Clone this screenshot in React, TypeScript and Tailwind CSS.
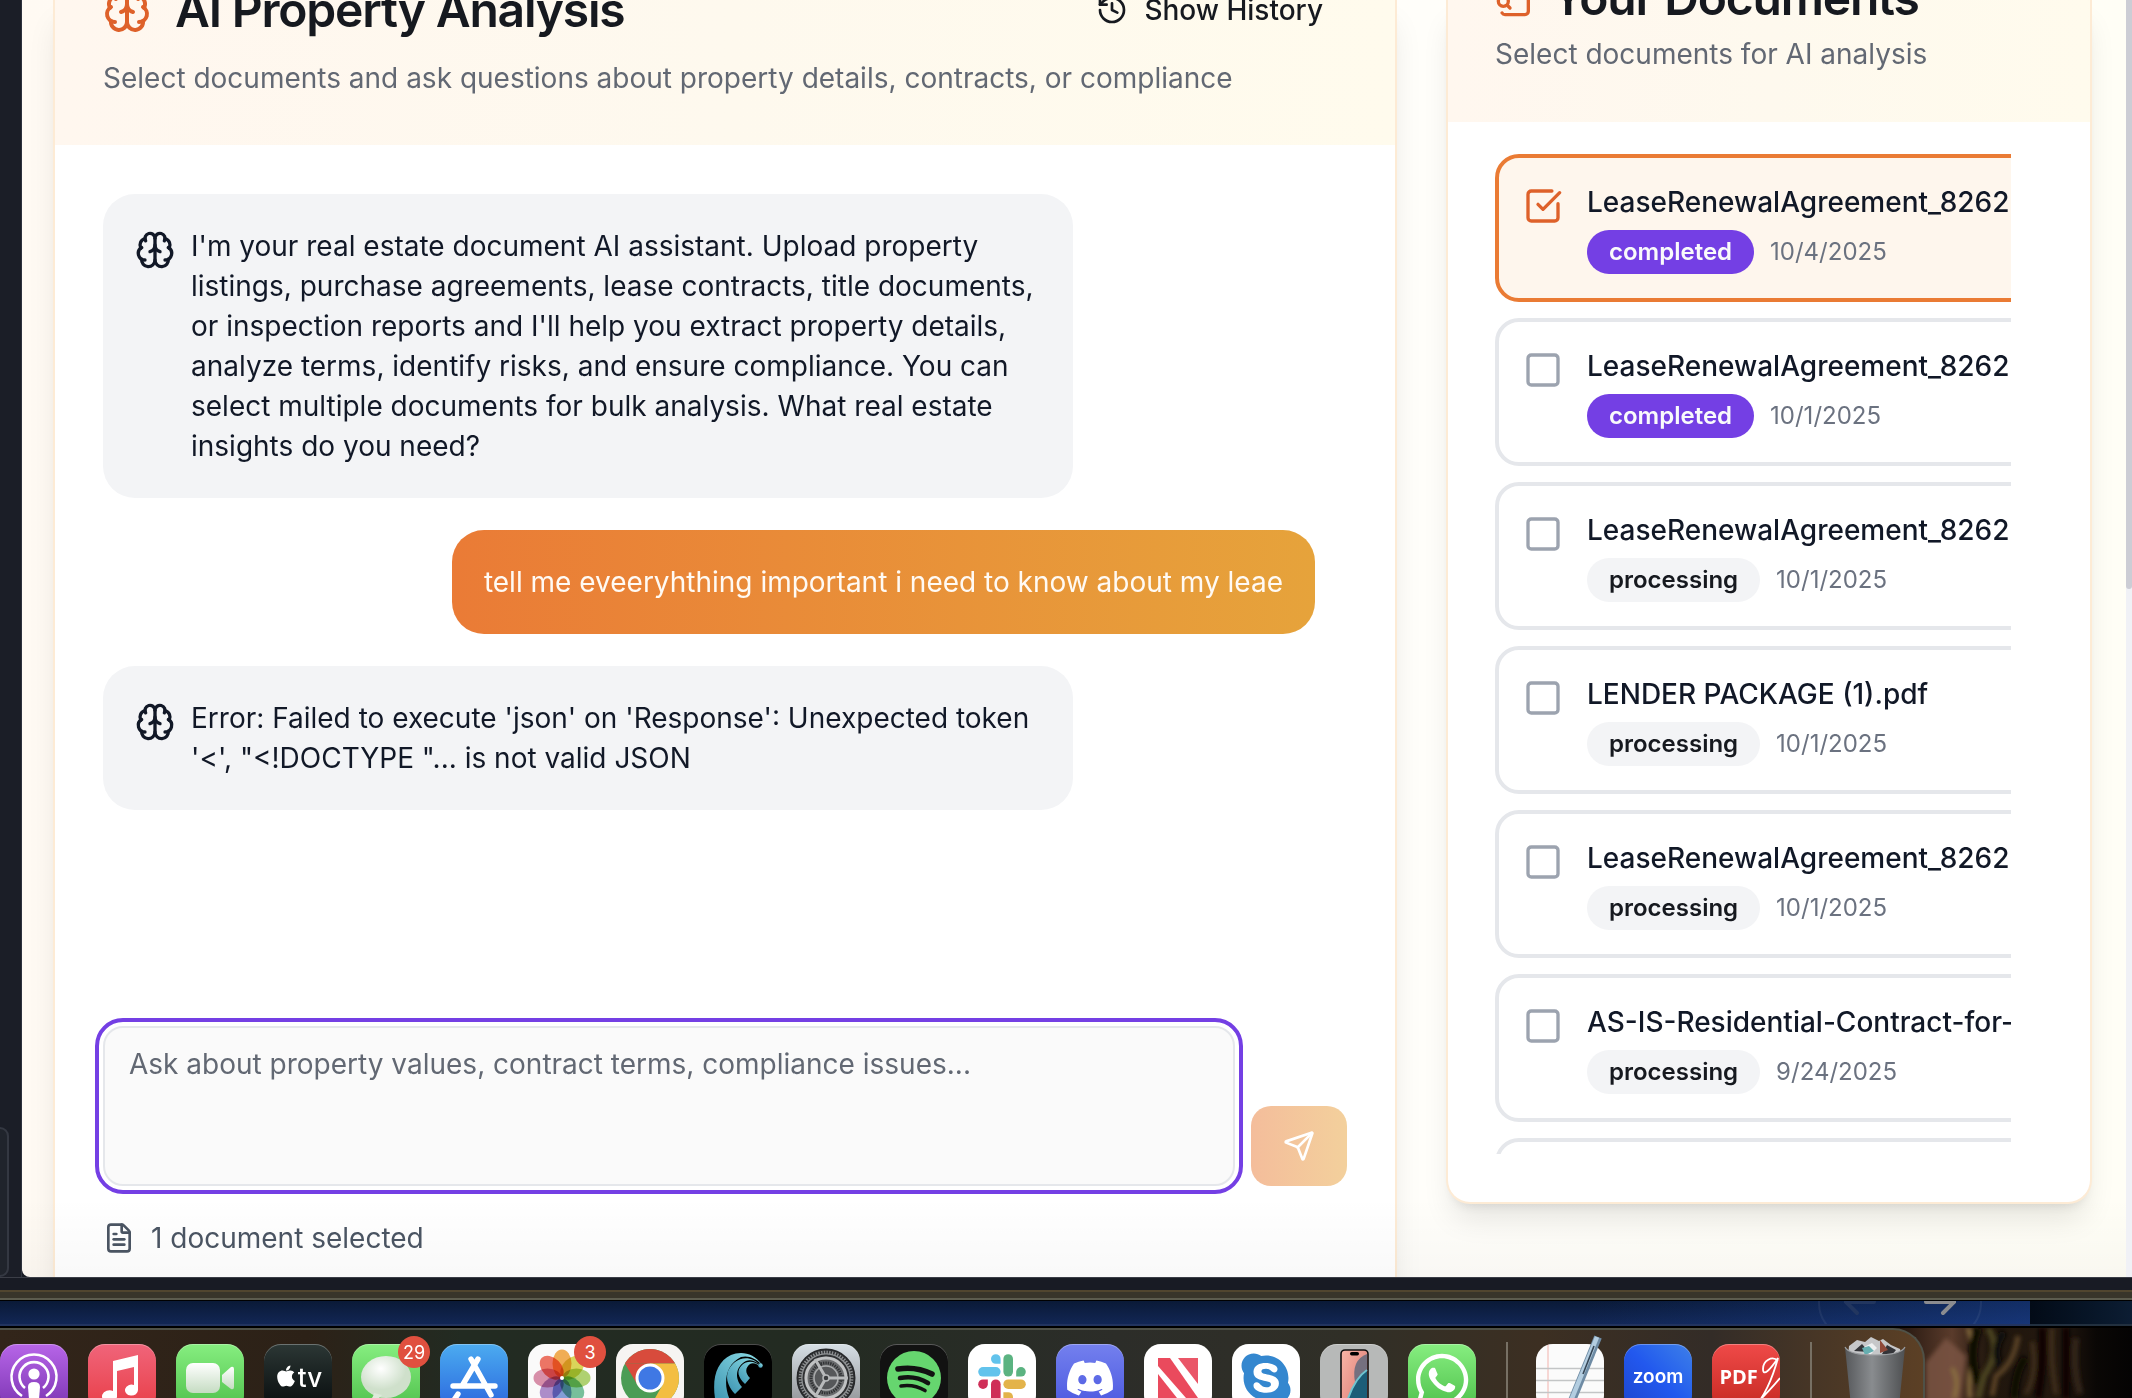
import React from "react";
import { Brain, History, FileText, Send, Square, SquareCheckBig } from "lucide-react";
import { FaApple, FaDiscord, FaWhatsapp, FaSkype } from "react-icons/fa";

const docs = [
  { name: "LeaseRenewalAgreement_8262", status: "completed", date: "10/4/2025", selected: true },
  { name: "LeaseRenewalAgreement_8262", status: "completed", date: "10/1/2025" },
  { name: "LeaseRenewalAgreement_8262", status: "processing", date: "10/1/2025" },
  { name: "LENDER PACKAGE (1).pdf", status: "processing", date: "10/1/2025" },
  { name: "LeaseRenewalAgreement_8262", status: "processing", date: "10/1/2025" },
  { name: "AS-IS-Residential-Contract-for-", status: "processing", date: "9/24/2025" },
];

function DocCard({ doc }: { doc: (typeof docs)[number] }) {
  return (
    <div
      className={
        "flex h-[148px] w-[640px] shrink-0 items-start gap-6 rounded-[24px] border-4 p-6 " +
        (doc.selected ? "border-[#ea7b34] bg-[#fef6ed]" : "border-[#e5e7eb] bg-white")
      }
    >
      {doc.selected ? (
        <SquareCheckBig size={40} strokeWidth={2} className="mt-1 shrink-0 text-[#de612a]" />
      ) : (
        <Square size={40} strokeWidth={2} className="mt-1 shrink-0 text-[#9ca3af]" />
      )}
      <div>
        <div className="text-[28px] leading-[40px] font-medium whitespace-nowrap text-[#111827]">{doc.name}</div>
        <div className="mt-2 flex items-center gap-4">
          <span
            className={
              "flex h-11 items-center rounded-full px-[22px] text-[24px] leading-8 font-semibold " +
              (doc.status === "completed" ? "bg-[#743fe4] text-[#f9fafb]" : "bg-[#f3f4f6] text-[#16191f]")
            }
          >
            {doc.status}
          </span>
          <span className="text-[24px] leading-8 text-[#6b7280]">{doc.date}</span>
        </div>
      </div>
    </div>
  );
}

function DocumentSearchIcon({ className = "" }: { className?: string }) {
  return (
    <svg width="40" height="40" viewBox="0 0 24 24" fill="none" stroke="currentColor" strokeWidth="2" strokeLinecap="round" strokeLinejoin="round" className={className}>
      <path d="M14 2v4a2 2 0 0 0 2 2h4" />
      <path d="M4.268 21a2 2 0 0 0 1.727 1H18a2 2 0 0 0 2-2V7l-5-5H6a2 2 0 0 0-2 2v3" />
      <path d="m9 18-1.500-1.500" />
      <circle cx="5" cy="14" r="3" />
    </svg>
  );
}

function BotMessage({ children }: { children: React.ReactNode }) {
  return (
    <div className="flex w-[970px] items-start gap-4 self-start rounded-[32px] bg-[#f3f4f6] p-8 text-[#111827]">
      <Brain size={40} className="mt-1 shrink-0" />
      <p className="text-[28px] leading-[40px] whitespace-nowrap">{children}</p>
    </div>
  );
}

function Tile({ className = "", badge, children }: { className?: string; badge?: string; children: React.ReactNode }) {
  return (
    <div className="relative h-[68px] w-[68px] shrink-0">
      <div className={"h-[68px] w-[68px] overflow-hidden rounded-[17px] shadow-[inset_0_1px_0_rgba(255,255,255,0.3)] " + className}>
        {children}
      </div>
      {badge && (
        <span className="absolute -top-[8px] right-[-10px] flex h-8 w-8 items-center justify-center rounded-full bg-[#e0503f] text-[18px] text-white">
          {badge}
        </span>
      )}
    </div>
  );
}

function Art({ children }: { children: React.ReactNode }) {
  return (
    <svg viewBox="0 0 68 68" width="68" height="68" fill="none">
      {children}
    </svg>
  );
}

const petals = [
  [0, "#f3a33a"], [45, "#d9d33f"], [90, "#a6cf5a"], [135, "#62b88d"],
  [180, "#6f8fd6"], [225, "#a37cc4"], [270, "#d67f9f"], [315, "#ee5f4c"],
] as const;

function Dock() {
  return (
    <div className="flex h-[70px] w-[1925px] items-start rounded-tr-[32px] border-t-2 border-r-2 border-[#4f5147] bg-[linear-gradient(90deg,#32251a_0%,#2c2117_16%,#222b22_24%,#232b22_42%,#2c2d29_58%,#302f27_70%,#3c2f22_80%,#332c27_89%,#5c4025_100%)] pt-[14px]">
      <div className="flex gap-5">
        <Tile className="bg-linear-to-b from-[#b765e8] to-[#7a32b0]">
          <Art>
            <path d="M22 52A22.500 22.500 0 1 1 46 52" stroke="#fff" strokeWidth="2.600" />
            <path d="M25 44A14.500 14.500 0 1 1 43 44" stroke="#fff" strokeWidth="2.600" />
            <circle cx="34" cy="30" r="5.600" fill="#fff" />
            <path d="M28 43q0-5 6-5t6 5l-2 25h-8z" fill="#fff" />
          </Art>
        </Tile>
        <Tile className="bg-linear-to-b from-[#f0647a] to-[#e83a44]">
          <Art>
            <path d="M25 17L50 11V46A6.500 5.500 0 1 1 46 41V23L29 27V52A7.500 6 0 1 1 25 47Z" fill="#fff" />
          </Art>
        </Tile>
        <Tile className="bg-linear-to-b from-[#86ee80] to-[#4cbf49]">
          <Art>
            <defs>
              <linearGradient id="cam" x2="0" y2="1"><stop stopColor="#fff" /><stop offset="1" stopColor="#c5dcc2" /></linearGradient>
            </defs>
            <rect x="10" y="19" width="34" height="30" rx="7" fill="url(#cam)" />
            <path d="M46 31l9-8q3-1 3 2v18q0 3-3 2l-9-7z" fill="url(#cam)" />
          </Art>
        </Tile>
        <Tile className="bg-linear-to-b from-[#2c3735] to-[#070b0c]">
          <div className="flex h-full items-center justify-center text-white">
            <FaApple size={24} className="-mt-1" />
            <span className="text-[26px] leading-none font-medium">tv</span>
          </div>
        </Tile>
        <Tile badge="29" className="bg-linear-to-b from-[#86ee80] to-[#4cbf49]">
          <Art>
            <defs>
              <radialGradient id="bub" cx=".4" cy=".3"><stop stopColor="#fff" /><stop offset="1" stopColor="#cfe0cb" /></radialGradient>
            </defs>
            <ellipse cx="34" cy="33" rx="25" ry="21" fill="url(#bub)" />
            <path d="M22 49q-1 6-6 8 9 0 14-6z" fill="#dde9da" />
          </Art>
        </Tile>
        <Tile className="bg-linear-to-b from-[#4cabf0] to-[#2e62dc]">
          <Art>
            <path d="M31 15l20 36M38 15L22 42M13 42h42M18 50l-4 6" stroke="#fff" strokeWidth="5.400" strokeLinecap="round" />
          </Art>
        </Tile>
        <Tile badge="3" className="bg-[#fafafa]">
          <Art>
            {petals.map(([a, c]) => (
              <ellipse key={a} cx="34" cy="19.500" rx="9.500" ry="14" fill={c} fillOpacity="0.85" transform={`rotate(${a} 34 34)`} className="mix-blend-multiply" />
            ))}
            <circle cx="34" cy="34" r="2" fill="#fff" />
          </Art>
        </Tile>
        <Tile className="bg-[#f6f4f2]">
          <Art>
            <circle cx="34" cy="34" r="29" fill="#4b9c55" />
            <path d="M8.900 19.500A29 29 0 0 1 59.100 19.500H34z" fill="#d84b3c" />
            <path d="M34 19.500H59.100A29 29 0 0 1 34 63l12.500-22z" fill="#f3be42" />
            <path d="M8.900 19.500L21.500 41 34 19.500z" fill="#d84b3c" />
            <circle cx="34" cy="34" r="14.500" fill="#fff" />
            <circle cx="34" cy="34" r="11.500" fill="#3f78e4" />
          </Art>
        </Tile>
        <Tile className="bg-black">
          <Art>
            <defs>
              <linearGradient id="wave" x1="1" x2="0" y2="1"><stop stopColor="#8fdfe8" /><stop offset="1" stopColor="#3b93b0" /></linearGradient>
            </defs>
            <g fill="url(#wave)">
              <path d="M58 21C50 8 36 7 27 11 12 18 7 36 12 60L28 60C19 44 19 22 37 13 45 11 52 15 57 20Z" />
              <path d="M57 22C48 12 38 13 31 18 21 26 20 38 31 50L38 43C30 34 32 22 42 17 48 15 53 18 57 22Z" />
              <path d="M57 23C50 16 43 17 38 21 32 27 34 33 41 40L46 34C41 29 41 24 46 20 50 18 54 21 57 23Z" />
              <circle cx="56.500" cy="21.500" r="2.200" />
            </g>
          </Art>
        </Tile>
        <Tile className="bg-linear-to-b from-[#d6dfe5] to-[#8b8d90]">
          <Art>
            <circle cx="34" cy="34" r="28.500" fill="#8d9092" stroke="#26282a" strokeWidth="2" />
            <circle cx="34" cy="34" r="26.500" stroke="#2e3032" strokeWidth="3.500" strokeDasharray="1.400 1.400" />
            <circle cx="34" cy="34" r="22.500" fill="#6a6c6e" stroke="#303234" strokeWidth="2" />
            <circle cx="34" cy="34" r="15" stroke="#303234" strokeWidth="3" strokeDasharray="1.400 1" />
            <path d="M34 34h22M34 34L23 15M34 34L23 53" stroke="#3a3c3e" strokeWidth="5.500" />
            <circle cx="34" cy="34" r="20" stroke="#c0c2c3" strokeWidth="3" />
            <circle cx="34" cy="34" r="12" fill="#56585a" stroke="#a9abac" strokeWidth="1.500" />
            <path d="M34 34h22M34 34L23 15M34 34L23 53" stroke="#b8babb" strokeWidth="3" />
            <circle cx="34" cy="34" r="3" fill="#3b3d3f" stroke="#b8babb" strokeWidth="1.500" />
          </Art>
        </Tile>
        <Tile className="bg-[#121212]">
          <Art>
            <circle cx="34" cy="34" r="27" fill="#66d66f" />
            <g stroke="#121212" strokeLinecap="round">
              <path d="M18 25q18-3 34 5" strokeWidth="5.600" />
              <path d="M20 34q15-3 28 5" strokeWidth="4.600" />
              <path d="M21 42q13-2 24 4.500" strokeWidth="3.600" />
            </g>
          </Art>
        </Tile>
        <Tile className="bg-white">
          <Art>
            <g strokeWidth="9.600" strokeLinecap="round">
              <path d="M15 27.800h12.800" stroke="#62c3ec" />
              <path d="M40.200 15v12.800" stroke="#5bb381" />
              <path d="M40.200 40.200H53" stroke="#e3b34a" />
              <path d="M27.800 40.200V53" stroke="#cf2f58" />
            </g>
            <path d="M32.600 19.800h-4.800a4.800 4.800 0 1 1 4.800-4.800z" fill="#62c3ec" />
            <path d="M48.200 32.600v-4.800a4.800 4.800 0 1 1 4.800 4.800z" fill="#5bb381" />
            <path d="M35.400 48.200h4.800a4.800 4.800 0 1 1-4.800 4.800z" fill="#e3b34a" />
            <path d="M19.800 35.400v4.800a4.800 4.800 0 1 1-4.800-4.800z" fill="#cf2f58" />
          </Art>
        </Tile>
        <Tile className="bg-linear-to-b from-[#7480ee] to-[#4a55df]">
          <div className="flex h-full items-center justify-center text-white"><FaDiscord size={50} /></div>
        </Tile>
        <Tile className="bg-white">
          <Art>
            <path d="M14 14h12l28 40H42L14 22z" fill="#ea4a5d" />
            <path d="M34 14h20v26z" fill="#ea5668" />
            <path d="M14 30v24h19z" fill="#ea4a5d" />
          </Art>
        </Tile>
        <Tile className="bg-white">
          <div className="h-full text-[#3487cf]">
            <FaSkype size={56} className="mx-auto translate-y-1.5" />
          </div>
        </Tile>
        <Tile className="bg-[#b7b9b8]">
          <Art>
            <defs>
              <linearGradient id="scr" x1="0" x2="1" y2="1"><stop stopColor="#f7b5a6" /><stop offset="1" stopColor="#d86f6a" /></linearGradient>
            </defs>
            <rect x="21" y="6" width="27" height="70" rx="4" fill="url(#scr)" stroke="#111" strokeWidth="1.600" />
            <path d="M47 26Q32 36 24 68h23z" fill="#1c5d78" />
            <path d="M47 10q-16 6-12 28l12-12z" fill="#75707f" />
            <path d="M47 26Q32 36 24 68" stroke="#6fc4d0" strokeWidth="2" />
            <rect x="30" y="8" width="9" height="3.400" rx="1.700" fill="#000" />
          </Art>
        </Tile>
        <Tile className="bg-linear-to-b from-[#86ee80] to-[#4cbf49]">
          <div className="flex h-full items-center justify-center text-white"><FaWhatsapp size={60} className="mt-1" /></div>
        </Tile>
      </div>
      <div className="-mt-[2px] ml-[30px] h-[60px] w-[2px] bg-[#777064]" />
      <div className="ml-7 flex gap-5">
        <div className="relative">
          <Tile className="bg-[#fbfbfb]">
            <Art>
              <path d="M12 0v68" stroke="#f2b3ad" strokeWidth="1" />
              <path d="M0 24.500h68M0 36.500h68M0 48.500h68M0 60h68" stroke="#c3c5c6" strokeWidth="1.600" />
            </Art>
          </Tile>
          <svg className="absolute -top-[10px] left-0" width="70" height="80" viewBox="0 0 70 80" fill="none">
            <path d="M62 3L33 74" stroke="#6e8ba4" strokeWidth="8" />
            <path d="M61 3L32 74" stroke="#b3cde0" strokeWidth="4.500" />
            <path d="M58 12L47 40" stroke="#364655" strokeWidth="1.600" />
          </svg>
        </div>
        <Tile className="bg-linear-to-bl from-[#3f7fe8] via-[#2258ee] to-[#1d45cc]">
          <div className="flex h-[64px] items-center justify-center text-[19px] leading-none font-semibold text-white">zoom</div>
        </Tile>
        <Tile className="bg-linear-to-b from-[#ef4a48] to-[#c4261f]">
          <Art>
            <text x="7.500" y="40" fill="#fff" fontSize="20" fontWeight="700" fontFamily="Open Sans, sans-serif">PDF</text>
            <path d="M66 17C60 11 51 17 51 25S58 26 66 14C60 36 50 58 36 70M42 62Q58 46 68 34" stroke="#fff" strokeWidth="1.800" />
          </Art>
        </Tile>
      </div>
      <div className="-mt-[2px] ml-[30px] h-[60px] w-[2px] bg-[#777064]" />
      <svg className="-mt-2 ml-8" width="62" height="70" viewBox="0 0 62 70" fill="none">
        <defs>
          <linearGradient id="bin"><stop stopColor="#56585b" /><stop offset=".45" stopColor="#898c8f" /><stop offset="1" stopColor="#4e5052" /></linearGradient>
        </defs>
        <path d="M5 10l8-6 8 2 6-5 8 4 4-2 8 6 9 4 2 8H4z" fill="#c6c7c9" />
        <path d="M10 15l8-7 7 8zM38 18l5-9 9 5-4 5z" fill="#343539" />
        <path d="M20 11l8-4 5 5-7 7z" fill="#eef0f1" />
        <path d="M18 12l7-2 5 5-9 4z" fill="#66aeb0" />
        <path d="M36 4l8 10-8 3z" fill="#8f4939" />
        <path d="M1 11q4 8 30 8t30-8l-6 59H7z" fill="url(#bin)" />
        <path d="M1 11q4 8 30 8t30-8" stroke="#9b9ea1" strokeWidth="1.200" />
      </svg>
    </div>
  );
}

function Bark() {
  return (
    <svg className="absolute top-0 right-0" width="240" height="70" viewBox="0 0 240 70" fill="none">
      <defs>
        <filter id="soft" x="-10%" y="-10%" width="120%" height="120%"><feGaussianBlur stdDeviation="2.200" /></filter>
        <linearGradient id="bark"><stop stopColor="#1d120c" /><stop offset=".25" stopColor="#5a3b2b" /><stop offset=".4" stopColor="#20160d" /><stop offset=".7" stopColor="#23180f" /><stop offset=".85" stopColor="#0a0705" /><stop offset="1" stopColor="#040303" /></linearGradient>
      </defs>
      <rect width="240" height="70" fill="url(#bark)" />
      <g filter="url(#soft)">
        <path d="M34 34l20-24 20 18-6 46H34z" fill="#7a5442" fillOpacity="0.85" />
        <path d="M62 70q6-18-2-30M78 70q-2-24 2-34t-4-36" stroke="#8a7040" strokeWidth="4" />
        <path d="M86 0q-10 26 0 56" stroke="#0c0806" strokeWidth="9" />
        <path d="M96 0q14 22-4 48l-6 22" stroke="#4b4420" strokeWidth="6" />
        <path d="M112 4q-12 18-4 34" stroke="#0e0907" strokeWidth="7" />
        <path d="M126 8q-4 28-22 40l-4 20" stroke="#5d4527" strokeWidth="5" />
        <path d="M122 70q2-30 12-40" stroke="#0c0806" strokeWidth="8" />
        <path d="M140 14q6 30-6 52M160 0q-2 30 4 66" stroke="#44301c" strokeWidth="4" />
        <path d="M150 0q2 40-4 70M174 0v70" stroke="#0a0605" strokeWidth="7" />
        <path d="M184 10q-4 26 4 56" stroke="#35251a" strokeWidth="6" />
      </g>
    </svg>
  );
}

export default function App() {
  return (
    <div className="flex h-[1398px] w-[2132px] flex-col overflow-hidden bg-[#181b24] font-['Inter',sans-serif]">
      <div className="flex h-[1277px] shrink-0">
        <aside className="flex w-[22px] shrink-0 items-end border-r border-[#2e323d] bg-[#1b1e27]">
          <div className="h-[150px] w-[9px] rounded-r-[10px] border-2 border-l-0 border-[#343842] bg-[#20242c]" />
        </aside>
        <main className="relative flex h-[1277px] w-[2104px] shrink-0 overflow-hidden rounded-bl-[8px] bg-linear-to-r from-[#fffaf3] via-[#fffefc] to-[#fffef6]">
          <section className="ml-[31px] flex h-[1310px] w-[1344px] shrink-0 flex-col border-x-2 border-[#fdebd5] bg-white shadow-[0_20px_30px_-6px_rgba(0,0,0,0.1),0_8px_12px_-8px_rgba(0,0,0,0.1)]">
            <header className="flex h-[145px] shrink-0 flex-col justify-end bg-linear-to-r from-[#fff7ef] via-[#fef9ee] to-[#fffbed] px-12 pb-[47px]">
              <div className="flex items-center justify-between">
                <div className="flex items-center gap-6">
                  <Brain size={48} className="text-[#de612a]" />
                  <h1 className="text-[48px] leading-[48px] font-semibold tracking-[-1.2px] text-[#16191f]">AI Property Analysis</h1>
                </div>
                <button className="mr-6 flex items-center gap-4 text-[28px] leading-10 font-medium text-[#16191f]">
                  <History size={32} />
                  Show History
                </button>
              </div>
              <p className="mt-6 text-[28px] leading-10 text-[#626873]">
                Select documents and ask questions about property details, contracts, or compliance
              </p>
            </header>
            <div className="flex flex-col gap-8 pt-[49px] pr-20 pl-12">
              <BotMessage>
                I'm your real estate document AI assistant. Upload property<br />
                listings, purchase agreements, lease contracts, title documents,<br />
                or inspection reports and I'll help you extract property details,<br />
                analyze terms, identify risks, and ensure compliance. You can<br />
                select multiple documents for bulk analysis. What real estate<br />
                insights do you need?
              </BotMessage>
              <div className="self-end rounded-[32px] bg-linear-to-r from-[#ea7b36] to-[#e6a33b] p-8 text-[28px] leading-10 text-[#fffaf4]">
                tell me eveeryhthing important i need to know about my leae
              </div>
              <BotMessage>
                Error: Failed to execute 'json' on 'Response': Unexpected token<br />
                '&lt;', "&lt;!DOCTYPE "... is not valid JSON
              </BotMessage>
            </div>
            <div className="mt-[216px] flex items-end gap-4 px-12">
              <div className="h-[160px] w-[1132px] rounded-[20px] border-2 border-[#e5e7eb] bg-[#fafafa] px-6 py-4 text-[28px] leading-10 text-[#626873] outline-4 outline-offset-4 outline-[#743fe4]">
                Ask about property values, contract terms, compliance issues...
              </div>
              <button className="flex h-20 w-24 items-center justify-center rounded-[20px] bg-linear-to-r from-[#f4bd9b] to-[#f3d09c] text-white">
                <Send size={32} />
              </button>
            </div>
            <div className="mt-8 flex items-center gap-4 px-12 text-[28px] leading-10 text-[#4b5563]">
              <FileText size={32} />
              1 document selected
            </div>
          </section>
          <section className="ml-[49px] flex h-[1204px] w-[646px] shrink-0 flex-col overflow-hidden rounded-b-[24px] border-2 border-t-0 border-[#fdebd5] bg-white shadow-[0_20px_30px_-6px_rgba(0,0,0,0.1),0_8px_12px_-8px_rgba(0,0,0,0.12)]">
            <header className="flex h-[122px] shrink-0 flex-col justify-end bg-linear-to-r from-[#fff7ef] via-[#fef9ee] to-[#fffbed] px-[47px] pb-12">
              <div className="flex items-center gap-4">
                <DocumentSearchIcon className="text-[#de612a]" />
                <h2 className="text-[48px] leading-[48px] font-semibold tracking-[-1.2px] whitespace-nowrap text-[#16191f]">Your Documents</h2>
              </div>
              <p className="mt-3 text-[28px] leading-10 text-[#626873]">Select documents for AI analysis</p>
            </header>
            <div className="mt-8 ml-[47px] flex h-[1000px] w-[516px] flex-col gap-4 overflow-hidden">
              {docs.map((d, i) => (
                <DocCard key={i} doc={d} />
              ))}
              <div className="h-[148px] w-[640px] shrink-0 rounded-[24px] border-4 border-[#e5e7eb]" />
            </div>
          </section>
          <div className="pointer-events-none absolute inset-x-0 bottom-0 h-20 bg-linear-to-b from-transparent to-black/[0.025]" />
        </main>
        <div className="h-[1277px] w-[6px] bg-[#f0f1f6]">
          <div className="h-[589px] rounded-b-[4px] bg-[#cccdd5]" />
        </div>
      </div>
      <div className="h-[13px] shrink-0 border-t border-[#3b3e47] bg-[#181b24]" />
      <div className="h-[10px] shrink-0 border-t-2 border-b-2 border-t-[#51462f] border-b-[#5c5c4e] bg-[#38352a]" />
      <div className="flex h-[28px] shrink-0 overflow-hidden border-t border-b-2 border-black bg-[#040b14]">
        <div className="flex h-[25px] w-[2030px] items-start justify-end overflow-hidden border-b-2 border-[#22345f] bg-[linear-gradient(90deg,transparent_78%,rgba(30,75,170,0.4)_100%),linear-gradient(180deg,#0a1a37,#122654)] pr-12">
          <div className="-mt-[36px] flex h-[74px] w-[164px] shrink-0 items-center justify-between rounded-[36px] border-2 border-white/6 px-6">
            <svg width="32" height="28" viewBox="0 0 32 28" fill="none" stroke="#22365f" strokeWidth="4" strokeLinecap="round">
              <path d="M30 14H2M13 25L2 14l11-11" />
            </svg>
            <svg width="32" height="28" viewBox="0 0 32 28" fill="none" stroke="#8b8c90" strokeWidth="4" strokeLinecap="round">
              <path d="M2 14h28M19 3l11 11-11 11" />
            </svg>
          </div>
        </div>
        <div className="h-[25px] flex-1 border-b-2 border-[#22303f] bg-linear-to-r from-[#030b17] to-[#0c1d33]" />
      </div>
      <div className="relative flex h-[70px] shrink-0 overflow-hidden bg-[#0b0806]">
        <Bark />
        <div className="relative">
          <Dock />
        </div>
      </div>
    </div>
  );
}
